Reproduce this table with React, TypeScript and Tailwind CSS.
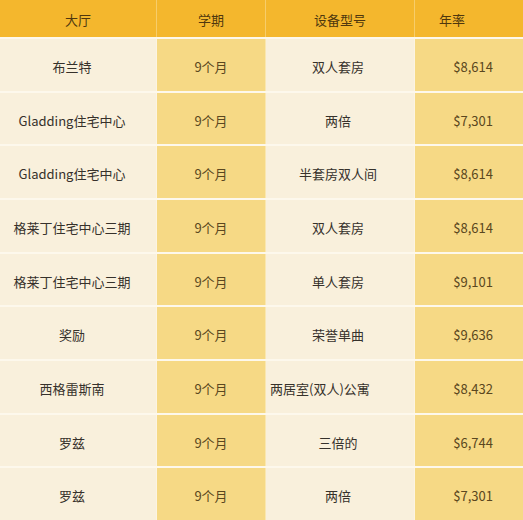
const rows = [
  { hall: '布兰特', term: '9个月', model: '双人套房', rate: '$8,614' },
  { hall: 'Gladding住宅中心', term: '9个月', model: '两倍', rate: '$7,301' },
  { hall: 'Gladding住宅中心', term: '9个月', model: '半套房双人间', rate: '$8,614' },
  { hall: '格莱丁住宅中心三期', term: '9个月', model: '双人套房', rate: '$8,614' },
  { hall: '格莱丁住宅中心三期', term: '9个月', model: '单人套房', rate: '$9,101' },
  { hall: '奖励', term: '9个月', model: '荣誉单曲', rate: '$9,636' },
  { hall: '西格雷斯南', term: '9个月', model: '两居室(双人)公寓', rate: '$8,432', left: true },
  { hall: '罗兹', term: '9个月', model: '三倍的', rate: '$6,744' },
  { hall: '罗兹', term: '9个月', model: '两倍', rate: '$7,301' },
]

const font = { fontFamily: '"Noto Sans CJK SC", "Noto Sans", sans-serif' }

export default function App() {
  return (
    <div className="flex h-[520px] w-[523px] flex-col overflow-hidden bg-[#f9f0dc] text-[13px]" style={font}>
      <div className="flex h-[37px] shrink-0 bg-[#f4b72d] text-[#4f370e]">
        <div className="flex w-[157px] items-center justify-center border-r border-[#f7cd6a] pt-0.5">大厅</div>
        <div className="flex w-[109px] items-center justify-center border-r border-[#f7cd6a] pt-0.5">学期</div>
        <div className="flex w-[149px] items-center justify-center border-r border-[#f7cd6a] pt-0.5">设备型号</div>
        <div className="flex flex-1 items-center pl-6 pt-0.5">年率</div>
      </div>
      {rows.map((r, i) => (
        <div key={i} className="flex flex-1 border-t-2 border-[#fdf8ec]">
          <div className="flex w-[157px] items-center justify-center border-r border-[#fcf4e2] bg-[#f9f0dc] pr-3 pt-1 text-[#36312b]">{r.hall}</div>
          <div className="flex w-[109px] items-center justify-center border-r border-[#fae7b0] bg-[#f6d985] pt-1 text-[#5a4720]">{r.term}</div>
          <div className={`flex w-[149px] items-center border-r border-[#fcf4e2] bg-[#f9f0dc] pt-1 text-[#36312b] ${r.left ? 'justify-start pl-1' : 'justify-center pr-1'}`}>{r.model}</div>
          <div className="flex flex-1 items-center justify-end bg-[#f6d985] pr-[30px] pt-1 text-[#5a4720]">{r.rate}</div>
        </div>
      ))}
    </div>
  )
}
